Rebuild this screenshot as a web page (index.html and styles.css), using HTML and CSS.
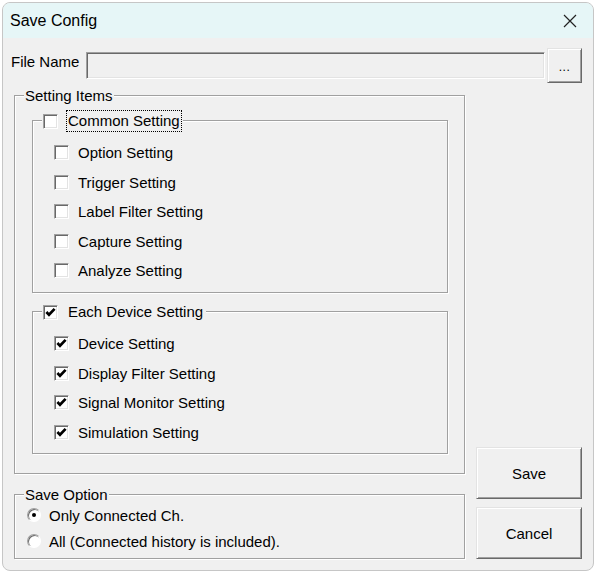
FILE: index.html
```html
<!DOCTYPE html>
<html>
<head>
<meta charset="utf-8">
<title>Save Config</title>
<link rel="stylesheet" href="styles.css">
</head>
<body>
<div class="window">
  <div class="titlebar">
    <span class="title">Save Config</span>
    <svg class="close" width="14" height="14" viewBox="0 0 14 14"><path d="M1 1L13 13M13 1L1 13" stroke="#222" stroke-width="1.2" fill="none"/></svg>
  </div>
  <div class="body">
    <div class="file-row">
      <span class="file-label">File Name</span>
      <div class="textbox"></div>
      <button class="btn browse">...</button>
    </div>
    <div class="main">
      <div class="left">
        <div class="group setting-items">
          <div class="legend">Setting Items</div>
          <div class="group sub">
            <div class="legend sub-legend">
              <span class="cb"></span>
              <span class="focus">Common Setting</span>
            </div>
            <div class="items common-items">
              <div class="row"><span class="cb"></span><span>Option Setting</span></div>
              <div class="row"><span class="cb"></span><span>Trigger Setting</span></div>
              <div class="row"><span class="cb"></span><span>Label Filter Setting</span></div>
              <div class="row"><span class="cb"></span><span>Capture Setting</span></div>
              <div class="row"><span class="cb"></span><span>Analyze Setting</span></div>
            </div>
          </div>
          <div class="group sub device">
            <div class="legend sub-legend">
              <span class="cb"><svg viewBox="0 0 13 13" width="13" height="13"><path d="M2.4 6L5 8.8L10.6 2.9" stroke="#000" stroke-width="2.7" fill="none"/></svg></span>
              <span class="focus nofocus">Each Device Setting</span>
            </div>
            <div class="items">
              <div class="row"><span class="cb"><svg viewBox="0 0 13 13" width="13" height="13"><path d="M2.4 6L5 8.8L10.6 2.9" stroke="#000" stroke-width="2.7" fill="none"/></svg></span><span>Device Setting</span></div>
              <div class="row"><span class="cb"><svg viewBox="0 0 13 13" width="13" height="13"><path d="M2.4 6L5 8.8L10.6 2.9" stroke="#000" stroke-width="2.7" fill="none"/></svg></span><span>Display Filter Setting</span></div>
              <div class="row"><span class="cb"><svg viewBox="0 0 13 13" width="13" height="13"><path d="M2.4 6L5 8.8L10.6 2.9" stroke="#000" stroke-width="2.7" fill="none"/></svg></span><span>Signal Monitor Setting</span></div>
              <div class="row"><span class="cb"><svg viewBox="0 0 13 13" width="13" height="13"><path d="M2.4 6L5 8.8L10.6 2.9" stroke="#000" stroke-width="2.7" fill="none"/></svg></span><span>Simulation Setting</span></div>
            </div>
          </div>
        </div>
        <div class="group save-option">
          <div class="legend">Save Option</div>
          <div class="radios">
            <div class="rrow"><span class="radio on"></span><span>Only Connected Ch.</span></div>
            <div class="rrow"><span class="radio"></span><span>All (Connected history is included).</span></div>
          </div>
        </div>
      </div>
      <div class="right">
        <button class="btn big">Save</button>
        <button class="btn big">Cancel</button>
      </div>
    </div>
  </div>
</div>
</body>
</html>
```

FILE: styles.css
```css
* { box-sizing: border-box; }
html, body { margin: 0; padding: 0; background: #fff; }
body {
  font-family: "Liberation Sans", Arial, sans-serif;
  font-size: 15px;
  color: #000;
}
.window {
  margin: 2px 0 0 2px;
  width: 592px;
  height: 569px;
  border: 1px solid #c6c6c6;
  border-radius: 8px;
  overflow: hidden;
  background: #f0f0f0;
  display: flex;
  flex-direction: column;
}
.titlebar {
  height: 35px;
  flex: none;
  background: #e6f6f7;
  display: flex;
  align-items: center;
  justify-content: space-between;
  padding: 0 16px 0 7px;
}
.title { font-size: 16px; line-height: 18px; padding-top: 1px; }
.close { display: block; }
.body {
  flex: 1;
  padding: 10px 11px 11px 8px;
  display: flex;
  flex-direction: column;
}
.file-row { display: flex; align-items: center; height: 35px; }
.file-label { width: 75px; flex: none; padding-bottom: 8px; }
.textbox {
  flex: 1;
  height: 27px;
  background: #f0f0f0;
  border: 1px solid;
  border-color: #a0a0a0 #fff #fff #a0a0a0;
  box-shadow: inset 1px 1px #696969, inset -1px -1px #e3e3e3;
}
.btn {
  font: inherit;
  color: #000;
  background: #f0f0f0;
  border: 1px solid;
  border-color: #e3e3e3 #696969 #696969 #e3e3e3;
  box-shadow: inset 1px 1px #fff, inset -1px -1px #a0a0a0;
  padding: 0;
  margin: 0;
}
.browse {
  width: 35px;
  height: 35px;
  margin-left: 2px;
  font-size: 12px;
  padding-top: 3px;
  letter-spacing: 0.5px;
}
.main {
  margin: 12px 0 0 3px;
  display: grid;
  grid-template-columns: 451px 106px;
  column-gap: 11px;
}
.group {
  border: 1px solid #a0a0a0;
  box-shadow: inset 1px 1px #fff, 1px 1px #fff;
}
.legend {
  width: fit-content;
  background: #f0f0f0;
  display: flex;
  align-items: center;
  height: 17px;
  line-height: 17px;
  margin: -9px 0 0 9px;
  padding: 0 1px;
}
.setting-items { padding-bottom: 19px; }
.sub { margin: 16px 16px 0 17px; }
.sub.device { margin-top: 18px; }
.sub-legend { height: 22px; margin-top: -11px; gap: 8px; }
.focus {
  border: 1px dotted #000;
  padding: 0 1px;
  line-height: 20px;
}
.focus.nofocus { border-color: transparent; }
.items { padding: 6px 0 6px 21px; }
.common-items { padding-bottom: 6.5px; }
.row { display: flex; align-items: center; height: 29.5px; gap: 9px; }
.cb {
  width: 15px;
  height: 15px;
  flex: none;
  display: block;
  background: #fff;
  border: 1px solid;
  border-color: #a0a0a0 #fff #fff #a0a0a0;
  box-shadow: inset 1px 1px #696969, inset -1px -1px #e3e3e3;
}
.cb svg { display: block; }
.save-option { margin-top: 20px; padding-bottom: 5px; }
.radios { display: flex; flex-direction: column; gap: 2px; padding-left: 12px; }
.rrow { display: flex; align-items: center; height: 24px; gap: 8px; }
.radio {
  width: 14px;
  height: 14px;
  flex: none;
  border-radius: 50%;
  background: #fff;
  border: 1px solid;
  border-color: #a0a0a0 #fff #fff #a0a0a0;
  box-shadow: inset 1px 1px #696969;
  display: flex;
  align-items: center;
  justify-content: center;
}
.radio.on::after {
  content: "";
  width: 4px;
  height: 4px;
  border-radius: 50%;
  background: #000;
}
.right {
  display: flex;
  flex-direction: column;
  justify-content: flex-end;
  gap: 8px;
}
.big { width: 106px; height: 52px; }
```
